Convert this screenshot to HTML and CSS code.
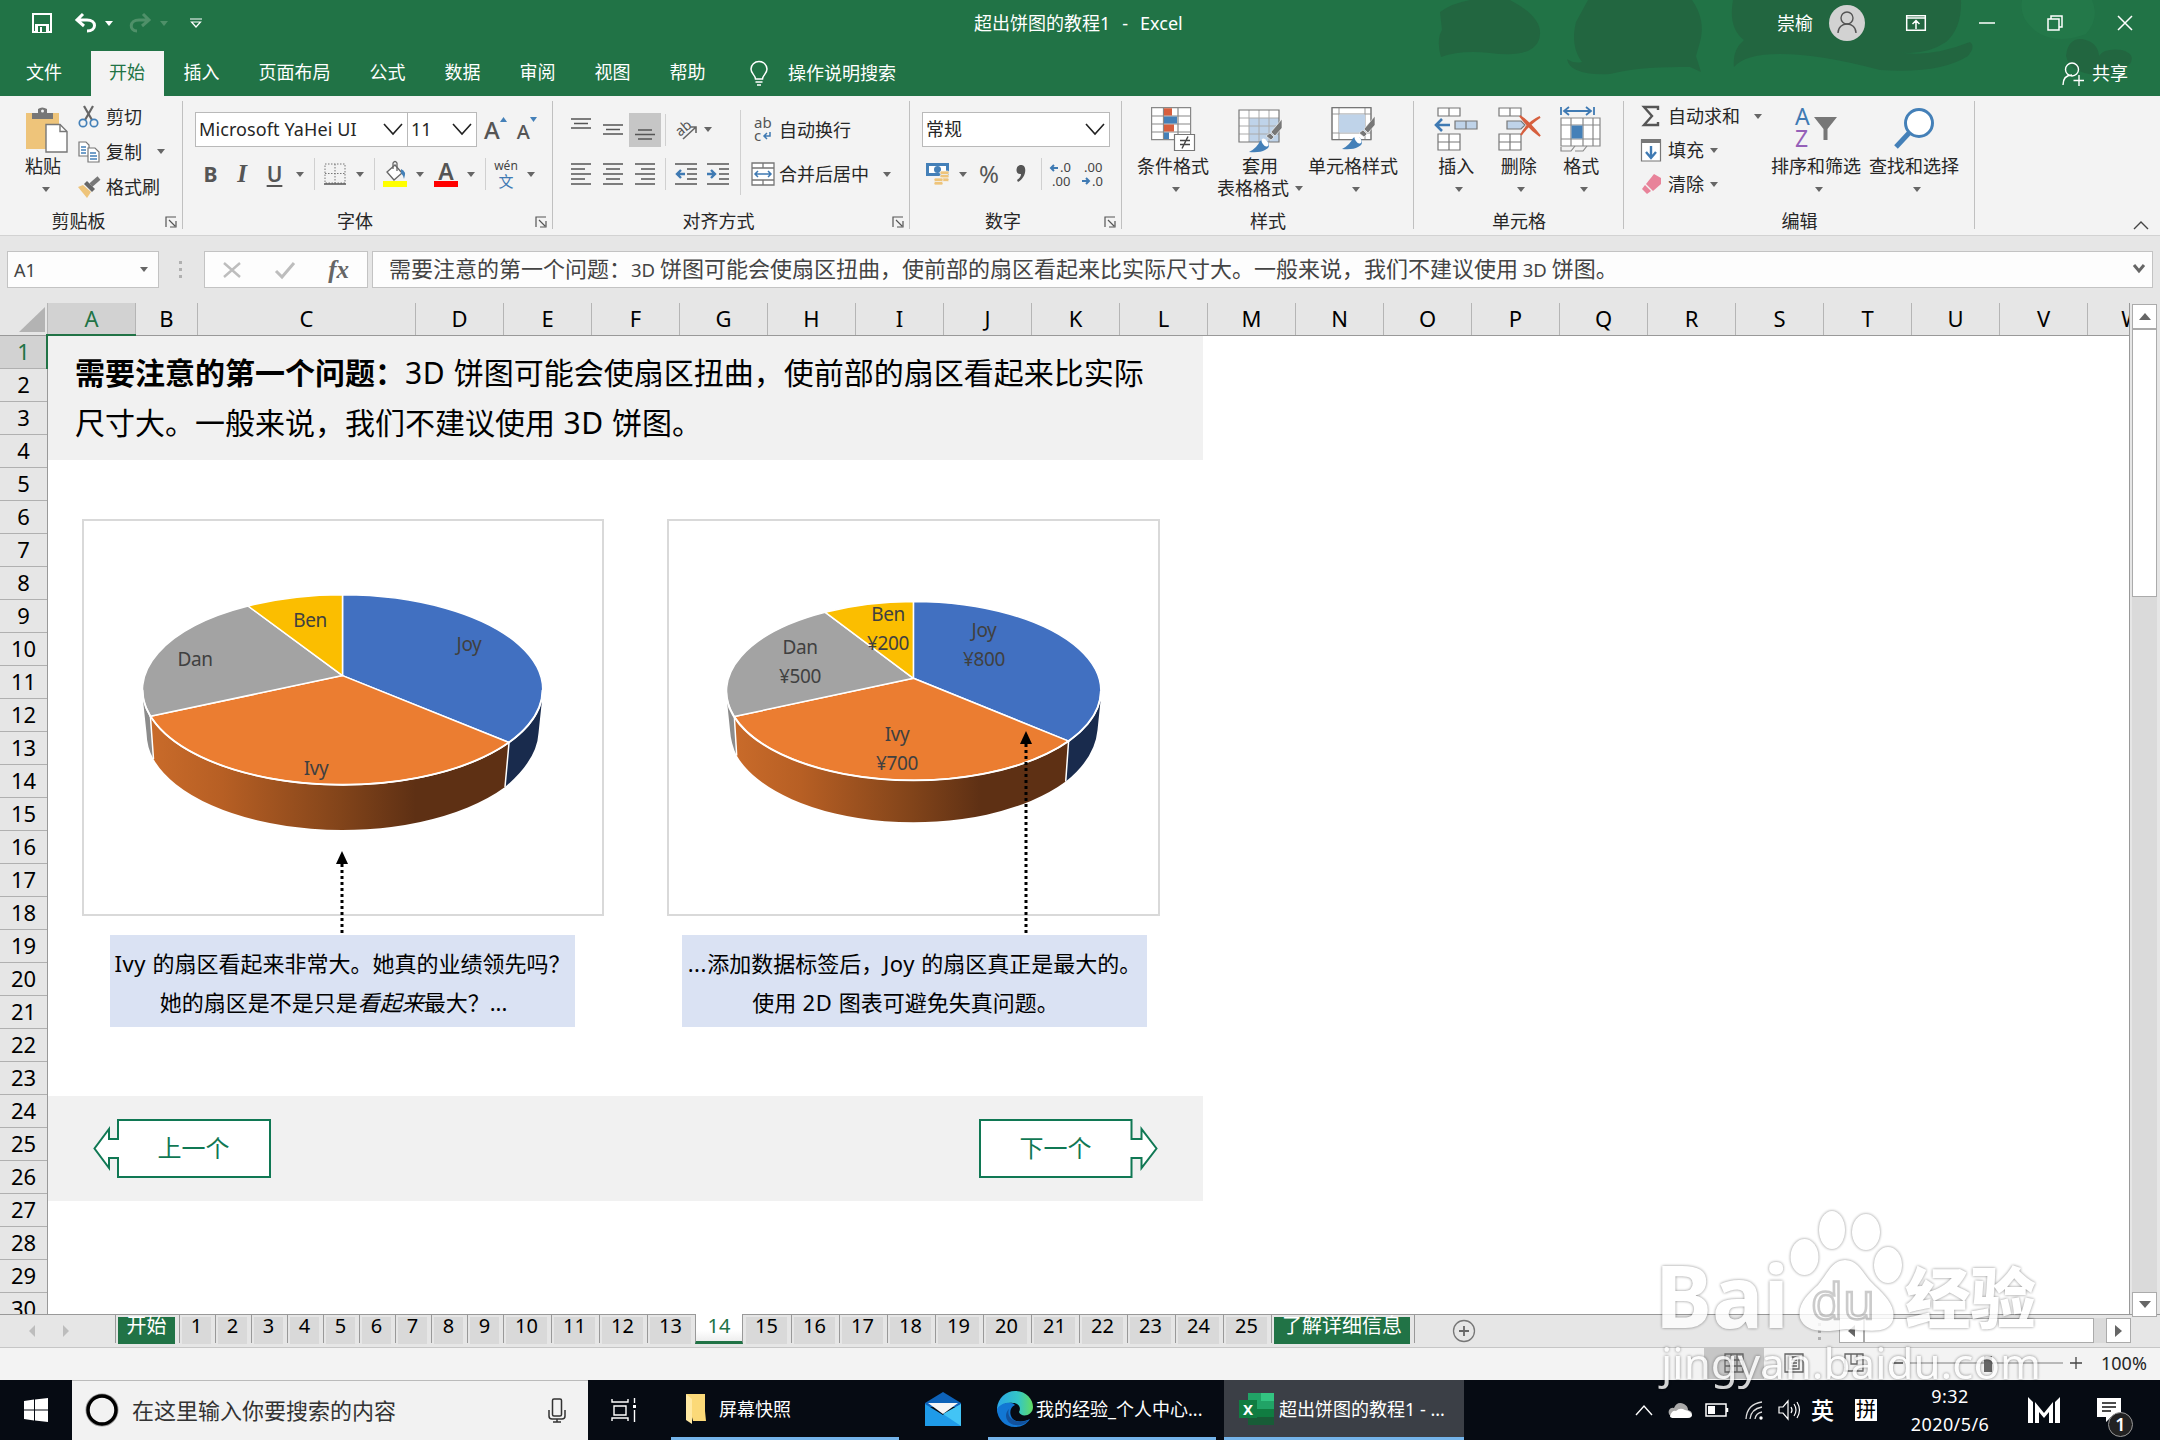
FILE: index.html
```
<!DOCTYPE html>
<html lang="zh-CN">
<head>
    <meta charset="UTF-8">
    <title>超出饼图的教程1 - Excel</title>
    <link rel="stylesheet" href="styles.css">
</head>
<body>
    <header class="titlebar">
        <svg class="title-art" width="760" height="96" viewBox="1400 0 760 96">
            <g fill="#226640">
                <path d="M1440 12 Q1465 -6 1510 0 Q1548 20 1538 42 Q1530 58 1490 53 Q1460 50 1441 57 Q1436 40 1442 30 Z"/>
                <path d="M1588 0 H1692 Q1706 20 1700 42 L1696 56 L1701 72 L1690 67 Q1640 66 1610 74 Q1570 76 1567 59 Q1574 64 1582 62 Q1570 46 1576 22 Z"/>
                <path d="M1733 0 H1961 Q1962 28 1946 42 Q1925 56 1898 52 Q1930 58 1970 42 Q1976 46 1968 56 Q1940 74 1880 70 Q1820 54 1780 54 Q1745 54 1734 67 Q1732 50 1744 40 Q1728 28 1733 0 Z"/>
                <path d="M2066 56 Q2068 38 2082 39 Q2098 42 2099 56 Q2104 48 2122 50 Q2136 54 2130 64 L2110 76 Q2070 76 2066 56 Z"/>
            </g>
            <path d="M2022 0 H2092 Q2100 18 2086 34 Q2060 44 2040 34 Q2018 20 2022 0Z" fill="#237849"/>
        </svg>
        <div class="title-row">
            <div class="quick-access">
                <svg width="20" height="20" viewBox="0 0 20 20"><path d="M1 1h18v18H1z" fill="none" stroke="#fff" stroke-width="2"/><path d="M3 11h14v8H3z" fill="#fff"/><path d="M6 13h8v6H6z" fill="#217346"/><path d="M8 14h2v5H8z" fill="#fff"/></svg>
                <svg class="undo" width="22" height="20" viewBox="0 0 22 20"><path d="M8 1 2 7l7 6M2 7h10c10 0 10 11 0 11" fill="none" stroke="#fff" stroke-width="3"/></svg>
                <i class="caret light"></i>
                <svg class="redo" width="22" height="20" viewBox="0 0 22 20"><path d="M14 1l6 6-7 6M20 7H10C0 7 0 18 8 18" fill="none" stroke="#4f9069" stroke-width="3"/></svg>
                <i class="caret dim"></i>
                <svg class="customize" width="12" height="10" viewBox="0 0 12 10"><path d="M0 1h12M1.500 4h9L6 9z" fill="none" stroke="#fff" stroke-width="1.200"/></svg>
            </div>
            <div class="doc-title">超出饼图的教程1<span>-</span>Excel</div>
            <div class="window-controls">
                <span class="user">崇榆</span>
                <svg width="36" height="36" viewBox="0 0 36 36"><circle cx="18" cy="18" r="18" fill="#d2d2d2"/><g fill="none" stroke="#555" stroke-width="1.400"><circle cx="18" cy="13" r="6"/><path d="M9 28c0-12 18-12 18 0"/></g></svg>
                <svg class="ribbon-opt" width="20" height="16" viewBox="0 0 20 16"><path d="M.7.7h18.600v14.600H.7zM.7 3h18.600M10 14V6M6.500 9 10 5.500 13.500 9" fill="none" stroke="#fff" stroke-width="1.500"/></svg>
                <svg class="minimize" width="16" height="16" viewBox="0 0 16 16"><path d="M0 8h16" stroke="#fff" stroke-width="1.500"/></svg>
                <svg class="restore" width="16" height="16" viewBox="0 0 16 16"><path d="M1 4h11v11H1zM4 4V1h11v11h-3" fill="none" stroke="#fff" stroke-width="1.500"/></svg>
                <svg class="close" width="16" height="16" viewBox="0 0 16 16"><path d="M1 1l14 14M15 1 1 15" stroke="#fff" stroke-width="1.500"/></svg>
            </div>
        </div>
        <nav class="menu">
            <span class="menu-tab file">文件</span>
            <span class="menu-tab active">开始</span>
            <span class="menu-tab">插入</span>
            <span class="menu-tab">页面布局</span>
            <span class="menu-tab">公式</span>
            <span class="menu-tab">数据</span>
            <span class="menu-tab">审阅</span>
            <span class="menu-tab">视图</span>
            <span class="menu-tab">帮助</span>
            <svg class="bulb" width="18" height="25" viewBox="0 0 18 25"><path d="M5.500 18c0-4-4.500-5-4.500-10a8 7.500 0 0 1 16 0c0 5-4.500 6-4.500 10zM5.500 21h7M7 24h4" fill="none" stroke="#fff" stroke-width="1.500"/></svg>
            <span class="tell-me">操作说明搜索</span>
            <div class="share">
                <svg width="22" height="24" viewBox="0 0 22 24"><path d="M10 13C4 13 1 17 1 23M17 13v11M11.500 18.500h10.500" fill="none" stroke="#fff" stroke-width="1.400"/><circle cx="10" cy="7.500" r="6.500" fill="none" stroke="#fff" stroke-width="1.400"/></svg>
                <span>共享</span>
            </div>
        </nav>
    </header>

    <section class="ribbon">
        <div class="group clipboard">
            <div class="group-body">
                <div class="big-btn paste">
                    <svg width="42" height="46" viewBox="0 0 42 46"><path d="M0 6h33v36H0z" fill="#eec47a"/><path d="M6 12V6h6V2q4-3 9 0v4h6v6z" fill="#777"/><circle cx="16.500" cy="4" r="1.500" fill="#f3f3f3"/><path d="M20 17.500h14l7 7v20.500H20z" fill="#fff" stroke="#777" stroke-width="1.400"/><path d="M34 17.500v7h7" fill="none" stroke="#777" stroke-width="1.400"/></svg>
                    <span>粘贴</span><i class="caret"></i>
                </div>
                <div class="small-list">
                    <div class="small-btn"><svg width="22" height="22" viewBox="0 0 22 22"><path d="M6 0l8 14M15 0 7 14" stroke="#666" stroke-width="2.200"/><g fill="none" stroke="#4480b8" stroke-width="1.700"><circle cx="5" cy="17" r="3.700"/><circle cx="16" cy="17" r="3.700"/></g></svg><span>剪切</span></div>
                    <div class="small-btn copy"><svg width="22" height="22" viewBox="0 0 22 22"><g fill="#fff" stroke="#777" stroke-width="1.200"><path d="M1 1h7l3 3v11H1z"/><path d="M10 7h7l4 4v10H10z"/></g><path d="M3 6h5M3 9h5M3 12h5M12 12h6M12 15h7M12 18h7" stroke="#4480b8" stroke-width="1.400"/></svg><span>复制</span><i class="caret"></i></div>
                    <div class="small-btn"><svg width="22" height="22" viewBox="0 0 22 22"><path d="M21 2l-8 7" stroke="#777" stroke-width="4.500"/><path d="M9 5l8 8-3 3-8-8z" fill="#666"/><path d="M5 9l8 7-4 6L0 11z" fill="#eec47a"/></svg><span>格式刷</span></div>
                </div>
            </div>
            <div class="group-label launch">剪贴板<svg width="12" height="12" viewBox="0 0 12 12"><path d="M1 11V1h10M4 4l6 6M11 5v6H5" fill="none" stroke="#555" stroke-width="1.200"/></svg></div>
        </div>

        <div class="group font">
            <div class="group-body rows">
                <div class="row-top">
                    <div class="select name">Microsoft YaHei UI<svg width="20" height="12" viewBox="0 0 20 12"><path d="M1 1l9 10 9-10" fill="none" stroke="#222" stroke-width="1.600"/></svg></div>
                    <div class="select size">11<svg width="20" height="12" viewBox="0 0 20 12"><path d="M1 1l9 10 9-10" fill="none" stroke="#222" stroke-width="1.600"/></svg></div>
                    <span class="grow-a">A<svg width="7" height="5" viewBox="0 0 7 5"><path d="M0 5 3.500 0 7 5z" fill="#4480b8"/></svg></span>
                    <span class="grow-a shrink">A<svg width="7" height="5" viewBox="0 0 7 5"><path d="M0 0h7L3.500 5z" fill="#4480b8"/></svg></span>
                </div>
                <div class="row-bottom font-tools">
                    <b>B</b><em class="serif-i">I</em><span class="under-u">U</span><i class="caret"></i><i class="sep"></i>
                    <svg width="22" height="22" viewBox="0 0 22 22"><path d="M1 1h20v19H1zM11 1v19M1 10.500h20" fill="none" stroke="#777" stroke-dasharray="1.500 1.500"/><path d="M0 21h22" stroke="#555" stroke-width="1.500"/></svg>
                    <i class="caret"></i><i class="sep"></i>
                    <svg width="24" height="26" viewBox="0 0 24 26"><path d="M4 11 12 4l7 8-8 7z" fill="#fff" stroke="#666" stroke-width="1.300"/><path d="M10 8V2q2-3 4 0v8" fill="none" stroke="#666" stroke-width="1.300"/><path d="M18 8q6 2 3 10-1-4-3-6z" fill="#4480b8"/><path d="M0 20h24v6H0z" fill="#ff0"/></svg>
                    <i class="caret"></i>
                    <span class="font-color">A</span>
                    <i class="caret"></i><i class="sep"></i>
                    <span class="phonetic"><small>wén</small><span>文</span></span>
                    <i class="caret"></i>
                </div>
            </div>
            <div class="group-label launch">字体<svg width="12" height="12" viewBox="0 0 12 12"><path d="M1 11V1h10M4 4l6 6M11 5v6H5" fill="none" stroke="#555" stroke-width="1.200"/></svg></div>
        </div>

        <div class="group align">
            <div class="group-body">
                <div class="align-left">
                    <div class="row-top align-tools">
                        <svg class="up" width="20" height="12" viewBox="0 0 20 12"><path d="M0 1h20M3 5.500h14M0 10h20" stroke="#555" stroke-width="1.300"/></svg>
                        <svg width="20" height="12" viewBox="0 0 20 12"><path d="M0 1h20M3 5.500h14M0 10h20" stroke="#555" stroke-width="1.300"/></svg>
                        <span class="pressed"><svg width="20" height="12" viewBox="0 0 20 12"><path d="M3 1h14M0 5.500h20M3 10h14" stroke="#555" stroke-width="1.300"/></svg></span>
                        <i class="sep"></i>
                        <svg width="22" height="22" viewBox="0 0 22 22"><text x="1" y="14" font-size="14" fill="#555" transform="rotate(-40 8 12)">ab</text><path d="M7 20 20 8M14 8h6v6" fill="none" stroke="#666" stroke-width="1.600"/></svg>
                        <i class="caret"></i>
                    </div>
                    <div class="row-bottom align-tools second">
                        <svg width="20" height="22" viewBox="0 0 20 22"><path d="M0 1h20M0 6h14M0 11h20M0 16h14M0 21h20" stroke="#555" stroke-width="1.300"/></svg>
                        <svg width="20" height="22" viewBox="0 0 20 22"><path d="M0 1h20M3 6h14M0 11h20M3 16h14M0 21h20" stroke="#555" stroke-width="1.300"/></svg>
                        <svg width="20" height="22" viewBox="0 0 20 22"><path d="M0 1h20M6 6h14M0 11h20M6 16h14M0 21h20" stroke="#555" stroke-width="1.300"/></svg>
                        <i class="sep"></i>
                        <svg width="22" height="22" viewBox="0 0 22 22"><path d="M0 1h22M12 6h10M12 11h10M12 16h10M0 21h22" stroke="#555" stroke-width="1.300"/><path d="M10 11H2M6 7l-4 4 4 4" fill="none" stroke="#3f7ab3" stroke-width="2.400"/></svg>
                        <svg width="22" height="22" viewBox="0 0 22 22"><path d="M0 1h22M12 6h10M12 11h10M12 16h10M0 21h22" stroke="#555" stroke-width="1.300"/><path d="M0 11h8M4 7l4 4-4 4" fill="none" stroke="#3f7ab3" stroke-width="2.400"/></svg>
                    </div>
                </div>
                <div class="align-right">
                    <div class="row-top wrap-btn">
                        <svg width="18" height="24" viewBox="0 0 18 24"><text x="0" y="10" font-size="15" fill="#555">ab</text><text x="0" y="23" font-size="15" fill="#555">c</text><path d="M16 14v4h-6M13 15l-3 3 3 3" fill="none" stroke="#3f7ab3" stroke-width="1.500"/></svg>
                        <span>自动换行</span>
                    </div>
                    <div class="row-bottom wrap-btn">
                        <svg width="24" height="24" viewBox="0 0 24 24"><path d="M1 1h22v22H1zM1 6h22M1 18h22M12 1v5M12 18v5" fill="#fff" stroke="#777" stroke-width="1.300"/><path d="M4 12h16M7 9l-3 3 3 3M17 9l3 3-3 3" fill="none" stroke="#3f7ab3" stroke-width="1.500"/></svg>
                        <span>合并后居中</span><i class="caret"></i>
                    </div>
                </div>
            </div>
            <div class="group-label launch">对齐方式<svg width="12" height="12" viewBox="0 0 12 12"><path d="M1 11V1h10M4 4l6 6M11 5v6H5" fill="none" stroke="#555" stroke-width="1.200"/></svg></div>
        </div>

        <div class="group number">
            <div class="group-body rows">
                <div class="row-top"><div class="select format">常规<svg width="20" height="12" viewBox="0 0 20 12"><path d="M1 1l9 10 9-10" fill="none" stroke="#222" stroke-width="1.600"/></svg></div></div>
                <div class="row-bottom number-tools">
                    <svg width="24" height="22" viewBox="0 0 24 22"><path d="M0 0h23v13H0z" fill="#4480b8"/><path d="M3 3h17v7H3z" fill="#fff"/><circle cx="11.500" cy="6.500" r="3.500" fill="#4480b8"/><g fill="#eec47a" stroke="#f3f3f3" stroke-width=".7"><rect x="14" y="8" width="9" height="3.500" rx="1.500"/><rect x="14" y="11.500" width="9" height="3.500" rx="1.500"/><rect x="14" y="15" width="9" height="3.500" rx="1.500"/><rect x="8" y="15" width="9" height="3.500" rx="1.500"/><rect x="8" y="18.500" width="9" height="3.500" rx="1.500"/></g></svg>
                    <i class="caret"></i><span class="percent">%</span>
                    <svg width="10" height="18" viewBox="0 0 10 18"><path d="M5 0c7 0 5 13-3 17l-1-2c3-2 4-4 4-6-6 1-6-9 0-9z" fill="#555"/></svg>
                    <i class="sep"></i>
                    <svg width="24" height="24" viewBox="0 0 24 24"><text x="10" y="10" font-size="13" fill="#444">.0</text><text x="2" y="24" font-size="13" fill="#444">.00</text><path d="M8 6H1M4 3 1 6l3 3" fill="none" stroke="#3f7ab3" stroke-width="2"/></svg>
                    <svg width="24" height="24" viewBox="0 0 24 24"><text x="2" y="10" font-size="13" fill="#444">.00</text><text x="10" y="24" font-size="13" fill="#444">.0</text><path d="M0 19h7M4 16l3 3-3 3" fill="none" stroke="#3f7ab3" stroke-width="2"/></svg>
                </div>
            </div>
            <div class="group-label launch">数字<svg width="12" height="12" viewBox="0 0 12 12"><path d="M1 11V1h10M4 4l6 6M11 5v6H5" fill="none" stroke="#555" stroke-width="1.200"/></svg></div>
        </div>

        <div class="group styles">
            <div class="group-body">
                <div class="big-btn">
                    <svg width="44" height="46" viewBox="0 0 44 46"><path d="M.6.6h39v32H.6zM.6 9h39M.6 17h39M.6 25h39M12.500.6v32M27 .6v32" fill="#fff" stroke="#888" stroke-width="1.200"/><path d="M13 1.200h8V8.500h-8zM13 17.500h10v7H13z" fill="#d65f3e"/><path d="M13 9.500h13v7H13zM13 25.500h5V32h-5z" fill="#4480b8"/><path d="M23.500 27.500h20v16h-20z" fill="#fff" stroke="#777" stroke-width="1.200"/><path d="M29 33.500h10M29 37.500h10M37 29.500l-6 12" stroke="#444" stroke-width="1.400"/></svg>
                    <span>条件格式</span><i class="caret"></i>
                </div>
                <div class="big-btn table-fmt">
                    <svg width="44" height="46" viewBox="0 0 44 46"><path d="M1 3h40v32H1z" fill="#fff"/><path d="M11 11h30v24H11z" fill="#bfd3e9"/><path d="M1 11h40M1 19h40M1 27h40M11 3v32M21 3v32M31 3v32" stroke="#aaa"/><path d="M1 3h40v32H1z" fill="none" stroke="#777" stroke-width="1.200"/><path d="M44 12v9l-7 8-4-4zM32 26l4 4-3 3-5-4z" fill="#777" stroke="#fff" stroke-width=".6"/><path d="M11 45q8-4 11-11 5-3 8 1 3 5-3 8-5 3-16 2z" fill="#4480b8"/><ellipse cx="27" cy="35.500" rx="2.600" ry="4.500" transform="rotate(-35 27 35.500)" fill="#fff"/></svg>
                    <span>套用</span><span class="second-line">表格格式<i class="caret"></i></span>
                </div>
                <div class="big-btn">
                    <svg width="44" height="46" viewBox="0 0 44 46"><path d="M1 .6h39v32H1zM1 7h39M1 26h39M8 .6v32M34 .6v32" fill="#fff" stroke="#999"/><path d="M1 .6h39v32H1z" fill="none" stroke="#777" stroke-width="1.200"/><path d="M8 7.500h26V25.500H8z" fill="#bfd3e9"/><path d="M44 9v9l-7 8-4-4zM32 23l4 4-3 3-5-4z" fill="#777" stroke="#fff" stroke-width=".6"/><path d="M11 42q8-4 11-11 5-3 8 1 3 5-3 8-5 3-16 2z" fill="#4480b8"/><ellipse cx="27" cy="32.500" rx="2.600" ry="4.500" transform="rotate(-35 27 32.500)" fill="#fff"/></svg>
                    <span>单元格样式</span><i class="caret"></i>
                </div>
            </div>
            <div class="group-label">样式</div>
        </div>

        <div class="group cells">
            <div class="group-body">
                <div class="big-btn">
                    <svg width="44" height="46" viewBox="0 0 44 46"><g fill="#fff" stroke="#777" stroke-width="1.200"><path d="M4 1h22v8H4zM15 1v8M4 27h22v16H4zM15 27v16M4 35h22"/></g><path d="M21 14h22v8H21zM32 14v8" fill="#bfd3e9" stroke="#777" stroke-width="1.200"/><path d="M16 18H2M8 12l-6 6 6 6" fill="none" stroke="#3f7ab3" stroke-width="2.600"/></svg>
                    <span>插入</span><i class="caret"></i>
                </div>
                <div class="big-btn">
                    <svg width="44" height="46" viewBox="0 0 44 46"><g fill="#fff" stroke="#777" stroke-width="1.200"><path d="M2 1h22v8H2zM13 1v8M2 27h22v16H2zM13 27v16M2 35h22"/></g><path d="M10 14h14l4 4-4 4H10z" fill="#bfd3e9" stroke="#777" stroke-width="1.200"/><path d="M23 9q9 6 20 20-10-7-20-20zM43 10q-12 8-19 18 6-12 19-18z" fill="#d65f3e" stroke="#d65f3e" stroke-width="2"/></svg>
                    <span>删除</span><i class="caret"></i>
                </div>
                <div class="big-btn">
                    <svg width="44" height="46" viewBox="0 0 44 46"><path d="M2 0v8M35 0v8M5 4h27M10 0 5 4l5 4M27 0l5 4-5 4" fill="none" stroke="#3f7ab3" stroke-width="1.800"/><path d="M2 11h39v28H2zM2 18h39M2 32h39M12 11v28M24 11v28M34 11v28" fill="#fff" stroke="#888" stroke-width="1.200"/><path d="M12.500 18.500h11v13h-11z" fill="#4480b8"/><path d="M2 40v4h10l4-5M16 44h8l4-5" fill="none" stroke="#888" stroke-width="1.200"/></svg>
                    <span>格式</span><i class="caret"></i>
                </div>
            </div>
            <div class="group-label">单元格</div>
        </div>

        <div class="group editing">
            <div class="group-body">
                <div class="small-list">
                    <div class="small-btn sum"><svg width="22" height="22" viewBox="0 0 22 22"><path d="M18 5V2H4l8 9-8 9h14v-3" fill="none" stroke="#555" stroke-width="2.400"/></svg><span>自动求和</span><i class="caret"></i></div>
                    <div class="small-btn"><svg width="22" height="24" viewBox="0 0 22 24"><path d="M1.500 2h19v21h-19z" fill="#fff" stroke="#777" stroke-width="1.200"/><path d="M1 1h20v4H1z" fill="#777"/><path d="M11 8v11M6 14l5 6 5-6" fill="none" stroke="#3f7ab3" stroke-width="2.400"/></svg><span>填充</span><i class="caret"></i></div>
                    <div class="small-btn"><svg width="22" height="22" viewBox="0 0 22 22"><path d="M14 1 21 5v6l-8 7-7-7z" fill="#e8839a"/><path d="M5 12l6 6-4 3-5-5z" fill="#e8839a"/></svg><span>清除</span><i class="caret"></i></div>
                </div>
                <div class="big-btn">
                    <svg width="44" height="46" viewBox="0 0 44 46"><text x="1" y="18" font-size="23" fill="#3f7ab3">A</text><text x="1" y="40" font-size="23" fill="#9560b8">Z</text><path d="M20 10h23L33.500 22v11h-4V22z" fill="#777"/></svg>
                    <span>排序和筛选</span><i class="caret"></i>
                </div>
                <div class="big-btn">
                    <svg width="44" height="46" viewBox="0 0 44 46"><circle cx="27" cy="16" r="13.500" fill="#fff" stroke="#4480b8" stroke-width="3"/><path d="M17 26 4 40" stroke="#4480b8" stroke-width="5"/></svg>
                    <span>查找和选择</span><i class="caret"></i>
                </div>
            </div>
            <div class="group-label">编辑</div>
        </div>
        <svg class="collapse" width="16" height="9" viewBox="0 0 16 9"><path d="M1 8l7-7 7 7" fill="none" stroke="#444" stroke-width="1.400"/></svg>
    </section>

    <section class="formula-bar">
        <div class="box name-box"><span>A1</span><i class="caret"></i></div>
        <div class="dots"></div>
        <div class="box fx-box">
            <svg width="18" height="16" viewBox="0 0 18 16"><path d="M1 1l16 14M17 1 1 15" stroke="#bdbdbd" stroke-width="2.400"/></svg>
            <svg width="20" height="16" viewBox="0 0 20 16"><path d="M1 9l6 6L19 1" fill="none" stroke="#bdbdbd" stroke-width="3"/></svg>
            <span class="fx">fx</span>
        </div>
        <div class="box formula"><span>需要注意的第一个问题：<small>3D </small>饼图可能会使扇区扭曲，使前部的扇区看起来比实际尺寸大。一般来说，我们不建议使用<small> 3D </small>饼图。</span>
            <svg width="12" height="10" viewBox="0 0 12 10"><path d="M1 1l5 6 5-6" fill="none" stroke="#666" stroke-width="3"/></svg>
        </div>
    </section>

    <main class="workbook">
        <div class="grid-area">
            <div class="col-heads">
                <div class="corner"><svg width="26" height="26" viewBox="0 0 26 26"><path d="M26 0v25H0z" fill="#b3b3b3"/></svg></div>
                <div class="col a">A</div><div class="col b">B</div><div class="col c">C</div>
                <div class="col">D</div><div class="col">E</div><div class="col">F</div><div class="col">G</div>
                <div class="col">H</div><div class="col">I</div><div class="col">J</div><div class="col">K</div>
                <div class="col">L</div><div class="col">M</div><div class="col">N</div><div class="col">O</div>
                <div class="col">P</div><div class="col">Q</div><div class="col">R</div><div class="col">S</div>
                <div class="col">T</div><div class="col">U</div><div class="col">V</div><div class="col">W</div>
            </div>
            <div class="grid-body">
                <div class="row-heads">
                    <div class="row selected">1</div><div class="row">2</div><div class="row">3</div><div class="row">4</div><div class="row">5</div>
                    <div class="row">6</div><div class="row">7</div><div class="row">8</div><div class="row">9</div><div class="row">10</div>
                    <div class="row">11</div><div class="row">12</div><div class="row">13</div><div class="row">14</div><div class="row">15</div>
                    <div class="row">16</div><div class="row">17</div><div class="row">18</div><div class="row">19</div><div class="row">20</div>
                    <div class="row">21</div><div class="row">22</div><div class="row">23</div><div class="row">24</div><div class="row">25</div>
                    <div class="row">26</div><div class="row">27</div><div class="row">28</div><div class="row">29</div><div class="row">30</div>
                </div>
                <div class="sheet">
                    <div class="banner"><b>需要注意的第一个问题：</b><span class="lat">3D </span>饼图可能会使扇区扭曲，使前部的扇区看起来比实际<br>尺寸大。一般来说，我们不建议使用<span class="lat"> 3D </span>饼图。</div>
                    <div class="charts">
                        <svg class="chart" width="522" height="397" viewBox="83 519 522 397">
                            <defs>
                                <linearGradient id="rim1" gradientUnits="userSpaceOnUse" x1="151" y1="0" x2="510" y2="0">
                                    <stop offset="0" stop-color="#c96b2a"/><stop offset=".2" stop-color="#b75f24"/><stop offset=".53" stop-color="#82441a"/><stop offset=".74" stop-color="#5e3014"/><stop offset="1" stop-color="#5e3014"/>
                                </linearGradient>
                            </defs>
                            <rect x="84" y="520" width="520" height="395" fill="#fff" stroke="#d9d9d9" stroke-width="2"/>
                            <path d="M144 700L147.500 733Q148 748 154.500 759L151.400 716Z" fill="#8c8c8c"/>
                            <path d="M543 700L539.500 733Q538 760 506 787L510 743Z" fill="#192b4d"/>
                            <path d="M151.400 716L154.500 759A196 97 0 0 0 506 787L510 743A200 95 0 0 1 151.400 716Z" fill="url(#rim1)"/>
                            <path d="M151.400 716L154.500 759M510 743L506 787" stroke="#fff" stroke-width="1.500"/>
                            <g stroke="#fff" stroke-width="1.500" stroke-linejoin="round">
                                <path d="M343.500 675.600V594.700A200 95 0 0 1 510 742.500Z" fill="#4170c1"/>
                                <path d="M343.500 675.600L510 742.500A200 95 0 0 1 151.400 716.200Z" fill="#eb7d31"/>
                                <path d="M343.500 675.600L151.400 716.200A200 95 0 0 1 249 606Z" fill="#a3a3a3"/>
                                <path d="M343.500 675.600L249 606A200 95 0 0 1 343.500 594.700Z" fill="#fbbe00"/>
                            </g>
                            <path d="M143.500 689.700A200 95 0 0 0 543.500 689.700" fill="none" stroke="#fff" stroke-width="1.800"/>
                            <g class="chart-label">
                                <text x="470" y="651">Joy</text><text x="311" y="627">Ben</text>
                                <text x="196" y="666">Dan</text><text x="317" y="775">Ivy</text>
                            </g>
                        </svg>
                        <svg class="chart" width="493" height="397" viewBox="667 519 493 397">
                            <defs>
                                <linearGradient id="rim2" gradientUnits="userSpaceOnUse" x1="734" y1="0" x2="1068" y2="0">
                                    <stop offset="0" stop-color="#c96b2a"/><stop offset=".2" stop-color="#b75f24"/><stop offset=".53" stop-color="#82441a"/><stop offset=".74" stop-color="#5e3014"/><stop offset="1" stop-color="#5e3014"/>
                                </linearGradient>
                            </defs>
                            <rect x="668" y="520" width="491" height="395" fill="#fff" stroke="#d9d9d9" stroke-width="2"/>
                            <path d="M727 701L730 730Q731 744 736.700 755.500L734.300 716Z" fill="#8c8c8c"/>
                            <path d="M1100.500 701L1097.500 730Q1095 758 1065.700 781.600L1068.600 741Z" fill="#192b4d"/>
                            <path d="M734.300 716L736.700 755.500A184 92.700 0 0 0 1065.700 781.600L1068.600 741A187.400 89.500 0 0 1 734.300 716Z" fill="url(#rim2)"/>
                            <path d="M734.300 716L736.700 755.500M1068.600 741L1065.700 781.600" stroke="#fff" stroke-width="1.500"/>
                            <g stroke="#fff" stroke-width="1.500" stroke-linejoin="round">
                                <path d="M913.400 678.300V601.400A187.400 89.500 0 0 1 1068.600 741.100Z" fill="#4170c1"/>
                                <path d="M913.400 678.300L1068.600 741.100A187.400 89.500 0 0 1 734.300 716.500Z" fill="#eb7d31"/>
                                <path d="M913.400 678.300L734.300 716.500A187.400 89.500 0 0 1 825 612.200Z" fill="#a3a3a3"/>
                                <path d="M913.400 678.300L825 612.200A187.400 89.500 0 0 1 913.400 601.400Z" fill="#fbbe00"/>
                            </g>
                            <path d="M726 690.900A187.400 89.500 0 0 0 1100.800 690.900" fill="none" stroke="#fff" stroke-width="1.800"/>
                            <g class="chart-label">
                                <text x="984" y="637">Joy</text><text x="984" y="666">¥800</text>
                                <text x="888" y="621">Ben</text><text x="888" y="650">¥200</text>
                                <text x="800" y="654">Dan</text><text x="800" y="683">¥500</text>
                                <text x="897" y="741">Ivy</text><text x="897" y="770">¥700</text>
                            </g>
                        </svg>
                    </div>
                    <div class="callouts">
                        <div class="callout"><span class="lat">Ivy </span>的扇区看起来非常大。她真的业绩领先吗？<br><span class="second">她的扇区是不是只是<em>看起来</em>最大？...</span></div>
                        <div class="callout"><span class="lat">...</span>添加数据标签后，<span class="lat">Joy </span>的扇区真正是最大的。<br><span class="second">使用<span class="lat"> 2D </span>图表可避免失真问题。</span></div>
                    </div>
                    <div class="nav-band">
                        <svg width="180" height="62" viewBox="92 1117 180 62"><path d="M118 1120H270V1177H118V1158H109V1168L94.500 1148.500L109 1129V1139H118Z" fill="#fff" stroke="#107854" stroke-width="2"/><text x="193.500" y="1157" class="nav-text">上一个</text></svg>
                        <svg width="180" height="62" viewBox="979 1117 180 62"><path d="M980 1120H1131.500V1139H1141.500V1129L1156.500 1148.500L1141.500 1168V1158H1131.500V1177H980Z" fill="#fff" stroke="#107854" stroke-width="2"/><text x="1055.500" y="1157" class="nav-text">下一个</text></svg>
                    </div>
                    <svg class="arrow first" width="14" height="84" viewBox="0 0 14 84"><path d="M7 0l6 13H1z"/><path d="M7 13v71" stroke="#000" stroke-width="3" stroke-dasharray="3 3"/></svg>
                    <svg class="arrow last" width="14" height="204" viewBox="0 0 14 204"><path d="M7 0l6 13H1z"/><path d="M7 13v191" stroke="#000" stroke-width="3" stroke-dasharray="3 3"/></svg>
                    <i class="cell-cursor"></i>
                </div>
            </div>
        </div>
        <div class="v-scroll">
            <div class="scroll-btn"><svg width="12" height="7" viewBox="0 0 12 7"><path d="M0 7 6 0l6 7z" fill="#666"/></svg></div>
            <div class="v-thumb"></div>
            <div class="scroll-btn end"><svg width="12" height="7" viewBox="0 0 12 7"><path d="M0 0h12L6 7z" fill="#666"/></svg></div>
        </div>
    </main>

    <section class="sheet-tabs">
        <div class="tab-nav">
            <svg width="6" height="12" viewBox="0 0 6 12"><path d="M6 0v12L0 6z" fill="#bdbdbd"/></svg>
            <svg width="6" height="12" viewBox="0 0 6 12"><path d="M0 0v12l6-6z" fill="#bdbdbd"/></svg>
        </div>
        <div class="tab start"><span>开始</span></div>
        <div class="tab"><span>1</span></div><div class="tab"><span>2</span></div><div class="tab"><span>3</span></div>
        <div class="tab"><span>4</span></div><div class="tab"><span>5</span></div><div class="tab"><span>6</span></div>
        <div class="tab"><span>7</span></div><div class="tab"><span>8</span></div><div class="tab"><span>9</span></div>
        <div class="tab two"><span>10</span></div><div class="tab two"><span>11</span></div><div class="tab two"><span>12</span></div>
        <div class="tab two"><span>13</span></div><div class="tab two current"><span>14</span></div><div class="tab two after"><span>15</span></div>
        <div class="tab two"><span>16</span></div><div class="tab two"><span>17</span></div><div class="tab two"><span>18</span></div>
        <div class="tab two"><span>19</span></div><div class="tab two"><span>20</span></div><div class="tab two"><span>21</span></div>
        <div class="tab two"><span>22</span></div><div class="tab two"><span>23</span></div><div class="tab two"><span>24</span></div>
        <div class="tab two"><span>25</span></div><div class="tab more"><span>了解详细信息</span></div>
        <svg class="add-sheet" width="24" height="24" viewBox="0 0 24 24"><circle cx="12" cy="12" r="10.500" fill="none" stroke="#777" stroke-width="1.300"/><path d="M12 7v10M7 12h10" stroke="#666" stroke-width="1.800"/></svg>
        <div class="h-scroll-wrap">
            <div class="dots small"></div>
            <div class="h-scroll">
                <div class="scroll-btn"><svg width="7" height="12" viewBox="0 0 7 12"><path d="M7 0v12L0 6z" fill="#666"/></svg></div>
                <div class="h-thumb"></div>
                <div class="scroll-btn end"><svg width="7" height="12" viewBox="0 0 7 12"><path d="M0 0v12l7-6z" fill="#666"/></svg></div>
            </div>
        </div>
    </section>

    <section class="status-bar">
        <div class="view-btn on"><svg width="20" height="20" viewBox="0 0 20 20"><path d="M1 1h18v18H1zM1 7h18M1 13h18M7 1v18M13 1v18" fill="none" stroke="#666" stroke-width="1.300"/></svg></div>
        <div class="view-btn"><svg width="20" height="20" viewBox="0 0 20 20"><path d="M1 1h18v18H1zM5 4h10v12H5zM7 7h6M7 10h6M7 13h6" fill="none" stroke="#666" stroke-width="1.300"/></svg></div>
        <div class="view-btn"><svg width="20" height="20" viewBox="0 0 20 20"><path d="M1 18V1h18v17zM7 1v10h6V1" fill="none" stroke="#666" stroke-width="1.300"/></svg></div>
        <svg class="zoom-slider" width="192" height="20" viewBox="0 0 192 20"><path d="M0 10h11M178 10h12M184 4v12" stroke="#444" stroke-width="1.300"/><path d="M18 10h153" stroke="#a6a6a6" stroke-width="1.300"/><path d="M92 3h8v16h-8z" fill="#666"/></svg>
        <span class="zoom-text">100%</span>
    </section>

    <footer class="taskbar">
        <div class="start-btn"><svg width="24" height="24" viewBox="0 0 24 24"><path d="M0 3l10-1.500v10H0zM11 1.400 24 0v11.500H11zM0 12.500h10v10L0 21zM11 12.500h13V24l-13-1.500z" fill="#fff"/></svg></div>
        <div class="search">
            <svg width="34" height="34" viewBox="0 0 34 34"><circle cx="17" cy="17" r="14.500" fill="none" stroke="#999" stroke-width="4"/><circle cx="17" cy="17" r="14" fill="none" stroke="#000" stroke-width="3.400"/></svg>
            <span>在这里输入你要搜索的内容</span>
            <svg class="mic" width="18" height="25" viewBox="0 0 18 25"><rect x="4.500" y="1" width="9" height="17" rx="1.500" fill="none" stroke="#333" stroke-width="1.500"/><path d="M1 12v6q0 3 3 3h10q3 0 3-3v-6M9 21v3M5 24h8" fill="none" stroke="#333" stroke-width="1.500"/></svg>
        </div>
        <div class="task-view"><svg width="24" height="24" viewBox="0 0 24 24"><path d="M0 1v3h16V1M2 8h12v9H2zM0 23v-3h16v3M22.500 0v5M22.500 12v12" fill="none" stroke="#fff" stroke-width="1.400"/><path d="M21 7h3v3h-3z" fill="#fff"/></svg></div>
        <div class="task open folder">
            <svg width="22" height="32" viewBox="0 0 22 32"><path d="M1 1h19v17l1 10H8z" fill="#fbd978"/><path d="M1 1l6 5v25l-6-4z" fill="#ffe9a3"/></svg>
            <span>屏幕快照</span>
        </div>
        <div class="task mail"><svg width="36" height="34" viewBox="0 0 36 34"><path d="M0 11 18 0l18 11v4H0z" fill="#0d62b8"/><path d="M3 11h30L18 22z" fill="#f5f5f5"/><path d="M0 12l18 11L36 12v22H0z" fill="#1f9be8"/><path d="M36 12v22L18 22z" fill="#42c4f5"/></svg></div>
        <div class="task open edge">
            <svg width="36" height="36" viewBox="0 0 36 36"><defs><linearGradient id="edgeTop" x1="0" x2="1"><stop offset="0" stop-color="#29a7e8"/><stop offset=".6" stop-color="#35c6c4"/><stop offset="1" stop-color="#62dc62"/></linearGradient></defs><path d="M0 17C1 7 9 0 18 0c11 0 18 8 18 16 0 9-12 11-14 5 2-3 1-9-6-9C8 11 2 15 0 22z" fill="url(#edgeTop)"/><path d="M0 18c4-7 15-8 18-4-5 2-6 8-3 13 4 5 12 4 18 1-4 6-9 8-15 8C8 36 0 28 0 18z" fill="#1277d4"/><path d="M12 18c-3 8 5 16 20 11-6 8-22 7-23-4 0-3 1-5 3-7z" fill="#12519c"/></svg>
            <span>我的经验_个人中心...</span>
        </div>
        <div class="task open excel">
            <svg width="36" height="32" viewBox="0 0 36 32"><path d="M9 0h26v32H9z" fill="#185c37"/><path d="M9 0h13v8H9zM9 8h13v8H9z" fill="#21a366"/><path d="M22 0h13v8H22z" fill="#33c481"/><path d="M9 16h26v8H9z" fill="#107c41"/><path d="M22 8h13v8H22z" fill="#21a366"/><path d="M0 7h18v18H0z" fill="#107c41"/><text x="9" y="21.500" font-size="15" font-weight="700" text-anchor="middle" fill="#fff">X</text></svg>
            <span>超出饼图的教程1 - ...</span>
        </div>
        <div class="tray">
            <svg class="t-up" width="18" height="11" viewBox="0 0 18 11"><path d="M1 10l8-9 8 9" fill="none" stroke="#fff" stroke-width="1.400"/></svg>
            <svg class="t-cloud" width="24" height="18" viewBox="0 0 24 18"><path d="M5 16q-6-2-4-7 2-3 5-2 3-7 10-4 4 2 4 6 4 1 4 4 0 4-5 4z" fill="#aaa"/><path d="M2 15q2-6 6-5 4-4 9-1 6 1 7 5 0 3-5 3H6q-4 0-4-2z" fill="#fff"/></svg>
            <svg class="t-bat" width="24" height="14" viewBox="0 0 24 14"><path d="M1 1h20v12H1zM22.500 5v4" fill="none" stroke="#fff" stroke-width="1.500"/><path d="M3 3h7v8H3z" fill="#fff"/></svg>
            <svg class="t-wifi" width="18" height="19" viewBox="0 0 18 19"><path d="M1 18Q2 3 17 1M5 18Q6 8 17 6M10 18q1-6 7-7" fill="none" stroke="#ddd" stroke-width="1.300"/><circle cx="16" cy="17" r="1.700" fill="#fff"/></svg>
            <svg class="t-vol" width="22" height="20" viewBox="0 0 22 20"><path d="M1 7h4l5-6v18l-5-6H1zM13 7q2 3 0 6M16 4q4 6 0 12M19 2q5 8 0 16" fill="none" stroke="#fff" stroke-width="1.200"/></svg>
            <span class="t-lang">英</span>
            <span class="t-ime">拼</span>
            <div class="clock"><span>9:32</span><span>2020/5/6</span></div>
            <svg class="t-m" width="32" height="26" viewBox="0 0 32 26"><path d="M0 0l5 5v21H0zM32 0l-5 5v21h5zM7 5l9 11 9-11v21h-4V15l-5 6-5-6v11H7z" fill="#fff"/></svg>
            <div class="notice">
                <svg width="24" height="24" viewBox="0 0 24 24"><path d="M0 0h24v19H14l-5 5v-5H0z" fill="#fff"/><path d="M5 5h14M5 9h14M5 13h9" stroke="#111" stroke-width="1.300"/></svg>
                <span class="badge">1</span>
            </div>
        </div>
    </footer>

    <svg class="watermark" width="400" height="200" viewBox="1650 1200 400 200">
        <ellipse cx="1804.500" cy="1257" rx="14" ry="18"/><ellipse cx="1832" cy="1230" rx="13" ry="19"/><ellipse cx="1866" cy="1232" rx="14" ry="18"/><ellipse cx="1888" cy="1265" rx="14" ry="18"/>
        <path d="M1845 1260c14 0 18 15 30 26 11 10 21 21 18 34-5 14-21 11-47 9-24 4-41 3-46-11-3-14 8-24 18-33 10-12 14-25 27-25z"/>
        <text x="1655" y="1328" font-size="86" font-weight="700" textLength="134" lengthAdjust="spacingAndGlyphs">Bai</text>
        <text x="1905" y="1323" font-size="66" font-weight="900" textLength="131" lengthAdjust="spacingAndGlyphs">经验</text>
        <text x="1661" y="1379" font-size="42" textLength="380" lengthAdjust="spacingAndGlyphs">jingyan.baidu.com</text>
        <text x="1811" y="1319" font-size="50" textLength="64" lengthAdjust="spacingAndGlyphs" class="wm-du">du</text>
    </svg>
</body>
</html>
```
FILE: styles.css
```
* {
    box-sizing: border-box;
}
body {
    margin: 0;
    width: 2160px;
    height: 1440px;
    overflow: hidden;
    position: relative;
    display: flex;
    flex-direction: column;
    font-family: "Noto Sans", "Noto Sans CJK SC", sans-serif;
    font-size: 18px;
    line-height: 24px;
    color: #262626;
    background: #e6e6e6;
    white-space: nowrap;
}
svg {
    display: block;
    flex: none;
    overflow: visible;
}
.caret {
    width: 0;
    height: 0;
    flex: none;
    border: 4px solid transparent;
    border-top: 5px solid #666;
    border-bottom: 0;
}
.caret.light { border-top-color: #fff; }
.caret.dim { border-top-color: #4f9069; }
.sep {
    width: 1px;
    height: 32px;
    background: #d0d0d0;
}

/* title bar */
.titlebar {
    position: relative;
    height: 96px;
    background: #217346;
    color: #fff;
}
.title-art {
    position: absolute;
    right: 0;
    top: 0;
    overflow: hidden;
}
.title-row {
    position: relative;
    height: 51px;
    display: grid;
    grid-template-columns: 974px 1fr auto;
    padding-bottom: 5px;
    align-items: center;
}
.quick-access {
    display: flex;
    align-items: center;
    padding-left: 32px;
}
.undo { margin: 0 8px 0 23px; }
.redo { margin: 0 9px 0 16px; }
.customize { margin-left: 22px; }
.doc-title span { margin: 0 12px; }
.window-controls {
    display: flex;
    align-items: center;
    padding-right: 27px;
}
.user { margin-right: 16px; }
.ribbon-opt { margin-left: 41px; }
.minimize { margin-left: 53px; }
.restore { margin-left: 52px; }
.close { margin-left: 54px; }
.menu {
    position: relative;
    display: flex;
    align-items: center;
    height: 45px;
}
.menu-tab {
    height: 45px;
    line-height: 43px;
    padding: 0 19.500px;
}
.menu-tab.file { padding: 0 29px 0 26px; }
.menu-tab.active {
    padding: 0 18px;
    width: 73px;
    background: #f3f3f3;
    color: #217346;
}
.bulb { margin: 0 20px 0 25px; }
.tell-me { margin-top: -2px; }
.share {
    margin-left: auto;
    margin-right: 32px;
    display: flex;
    gap: 8px;
}
.share span { margin-top: -1px; }

/* ribbon */
.ribbon {
    height: 140px;
    flex: none;
    display: flex;
    position: relative;
    background: #f3f3f3;
    border-bottom: 1px solid #d2d2d2;
}
.group {
    display: flex;
    flex-direction: column;
    position: relative;
}
.group::after {
    content: "";
    position: absolute;
    right: 0;
    top: 5px;
    width: 1px;
    height: 128px;
    background: #c0c0c0;
}
.clipboard { width: 183px; }
.font { width: 370px; }
.align { width: 357px; }
.number { width: 212px; }
.styles { width: 292px; }
.cells { width: 210px; }
.editing { width: 351px; }
.group-body {
    height: 113px;
    display: flex;
}
.group-body.rows {
    display: block;
    padding-left: 12px;
}
.group-label {
    height: 24px;
    line-height: 22px;
    display: flex;
    justify-content: center;
    align-items: center;
}
.group-label.launch {
    justify-content: space-between;
    padding-right: 6px;
}
.group-label.launch::before {
    content: "";
}
.group-label.launch svg { margin: 2px 0 0 8px; }
.big-btn {
    display: flex;
    flex-direction: column;
    align-items: center;
    padding-top: 11px;
}
.big-btn > span {
    height: 23px;
    line-height: 23px;
    margin-top: 2px;
}
.big-btn > .caret { margin: 9px 0 0 5px; }
.big-btn .second-line {
    margin-top: -1px;
    display: flex;
    align-items: center;
    gap: 6px;
}
.paste { width: 78px; padding-left: 8px; }
.paste svg { margin-left: 7px; }
.small-list {
    padding-top: 3px;
    display: flex;
    flex-direction: column;
}
.small-btn {
    height: 35px;
    display: flex;
    align-items: center;
    gap: 6px;
}
.small-btn.copy .caret { margin-left: 9px; }
.row-top {
    height: 35px;
    margin-top: 16px;
    display: flex;
}
.row-bottom {
    height: 32px;
    margin-top: 11px;
}
.select {
    border: 1px solid #b9b9b9;
    background: #fff;
    display: flex;
    align-items: center;
    justify-content: space-between;
    padding: 0 4px 1px 3px;
}
.select.name { width: 213px; letter-spacing: 0.1px; }
.select.size { width: 70px; margin-left: -1px; }
.select.format { width: 188px; }
.grow-a {
    display: flex;
    font-size: 24px;
    line-height: 36px;
    color: #555;
    margin-left: 7px;
    font-weight: 500;
}
.grow-a svg { margin-top: 5px; }
.grow-a.shrink {
    font-size: 20px;
    line-height: 40px;
    margin-left: 10px;
}
.font-tools {
    display: grid;
    grid-template-columns: 31px 32px 33px 18px 11px 29px 22px 7px 34px 16px 36px 14px 14px 28px 22px;
    place-items: center;
    color: #555;
}
.font-tools b, .under-u { font-size: 21px; }
.under-u { text-decoration: underline; font-weight: 600; text-decoration-thickness: 1.500px; text-underline-offset: 3px; }
.serif-i {
    font-family: "Liberation Serif", serif;
    font-size: 25px;
    font-weight: bold;
}
.font-color {
    width: 24px;
    height: 26px;
    border-bottom: 6px solid #f00;
    text-align: center;
    font-size: 23px;
    line-height: 20px;
    font-weight: 600;
}
.phonetic {
    display: flex;
    flex-direction: column;
    align-items: center;
    color: #3f7ab3;
    font-size: 15px;
    line-height: 17px;
}
.phonetic small {
    color: #444;
    font-size: 12px;
    line-height: 15px;
}
.align-left {
    width: 188px;
    padding-left: 12px;
    position: relative;
}
.align-left::after {
    content: "";
    position: absolute;
    right: 0;
    top: 14px;
    width: 1px;
    height: 85px;
    background: #d0d0d0;
}
.align-tools {
    display: grid;
    grid-template-columns: 32px 32px 32px 8px 35px 8px;
    place-items: center;
}
.align-tools.second { grid-template-columns: 32px 32px 32px 8px 34px 30px; }
.align-tools .up { margin-bottom: 12px; }
.pressed {
    width: 32px;
    height: 34px;
    background: #c6c6c6;
    display: flex;
    justify-content: center;
    align-items: flex-end;
    padding-bottom: 6px;
}
.wrap-btn {
    margin-left: 10px;
    display: grid;
    grid-template-columns: 24px auto auto;
    justify-content: start;
    align-items: center;
    justify-items: center;
    column-gap: 4px;
}
.wrap-btn .caret { margin-left: 10px; }
.number-tools {
    display: grid;
    grid-template-columns: 32px 18px 34px 30px 10px 32px 32px;
    place-items: center;
    color: #555;
}
.percent { font-size: 24px; }
.styles .group-body { padding-left: 7px; }
.styles .big-btn:nth-child(1) { width: 88px; }
.styles .big-btn:nth-child(2) { width: 86px; }
.styles .big-btn:nth-child(3) { width: 100px; }
.cells .group-body { padding-left: 11px; }
.cells .big-btn { width: 62.500px; }
.editing .group-body { padding-left: 16px; }
.editing .small-list { width: 127px; }
.editing .small-btn { height: 34px; }
.editing .small-btn .caret { margin-left: 0; }
.editing .small-btn.sum .caret { margin-left: 8px; }
.editing .big-btn { width: 98px; }
.collapse {
    margin: 125px 11px 0 auto;
}

/* formula bar */
.formula-bar {
    height: 67px;
    flex: none;
    display: flex;
    align-items: center;
    padding: 0 7px 0 7px;
}
.box {
    height: 37px;
    background: #fdfdfd;
    border: 1px solid #c3c3c3;
    display: flex;
    align-items: center;
    justify-content: space-between;
    color: #444;
}
.name-box { width: 152px; padding: 0 10px 0 6px; }
.dots {
    width: 3px;
    height: 17px;
    margin: 0 22px 0 20px;
    background: repeating-linear-gradient(#b0b0b0 0 3px, transparent 3px 7px);
}
.fx-box { width: 164px; padding: 0 18px; }
.fx {
    font-family: "Liberation Serif", serif;
    font-style: italic;
    font-weight: bold;
    font-size: 25px;
    color: #666;
}
.formula {
    flex: 1;
    margin-left: 4px;
    padding: 0 7px 2px 16px;
    font-size: 22px;
}
.formula small {
    font-size: 18.500px;
    white-space: pre;
}

/* grid */
.workbook {
    height: 1011px;
    flex: none;
    display: flex;
}
.grid-area {
    width: 2130px;
    overflow: hidden;
    border-right: 1px solid #999;
}
.col-heads {
    height: 33px;
    display: flex;
    border-bottom: 1px solid #999;
    font-size: 22px;
    line-height: 30px;
    color: #000;
}
.corner {
    width: 48px;
    flex: none;
    padding: 4px 0 0 19px;
    border-right: 1px solid #b5b5b5;
}
.col {
    width: 88px;
    flex: none;
    text-align: center;
    border-right: 1px solid #b5b5b5;
}
.col.a {
    background: #d2d2d2;
    color: #217346;
}
.col.b { width: 62px; }
.col.c { width: 218px; }
.grid-body {
    display: flex;
    height: 978px;
}
.row-heads {
    width: 48px;
    flex: none;
    border-right: 1px solid #999;
    overflow: hidden;
    font-size: 22px;
    color: #000;
}
.row {
    height: 33px;
    line-height: 30px;
    text-align: center;
    border-bottom: 1px solid #b0b0b0;
}
.row.selected {
    background: #d2d2d2;
    color: #217346;
}
.sheet {
    flex: 1;
    position: relative;
    background: #fff;
    color: #000;
}
.banner {
    width: 1155px;
    height: 124px;
    padding: 12px 27px;
    background: #f1f1f1;
    font-size: 30px;
    line-height: 49.500px;
}
.lat {
    white-space: pre;
    letter-spacing: 0.6px;
}
.charts {
    display: flex;
    gap: 63px;
    margin: 59px 0 0 34px;
}
.chart-label {
    font-size: 19px;
    letter-spacing: -0.4px;
    text-anchor: middle;
    fill: #404040;
}
.callouts {
    display: flex;
    gap: 107px;
    margin: 19px 0 0 62px;
}
.callout {
    width: 465px;
    height: 92px;
    padding-top: 9px;
    background: #dae2f3;
    font-size: 22px;
    line-height: 39px;
    text-align: center;
}
.callout .second { padding-right: 18px; }
.nav-band {
    width: 1155px;
    height: 105px;
    margin-top: 69px;
    padding: 21px 44px;
    display: flex;
    justify-content: space-between;
    background: #f1f1f1;
}
.nav-text {
    font-size: 24px;
    text-anchor: middle;
    fill: #107854;
}
.arrow { position: absolute; }
.arrow.first { left: 287px; top: 515px; }
.arrow.last { left: 971px; top: 395px; }
.cell-cursor {
    position: absolute;
    left: -2px;
    top: -2px;
    width: 90px;
    height: 35px;
    border-left: 2px solid #217346;
    border-top: 2px solid #217346;
}
.v-scroll {
    width: 25px;
    height: 1013px;
    margin: 1px 0 0 2px;
    background: #dadada;
    display: flex;
    flex-direction: column;
    z-index: 1;
}
.scroll-btn {
    width: 25px;
    height: 25px;
    flex: none;
    display: flex;
    align-items: center;
    justify-content: center;
    background: #fff;
    border: 1px solid #ababab;
}
.v-thumb {
    height: 268px;
    background: #fff;
    border: 1px solid #ababab;
}
.v-scroll .end { margin-top: auto; }

/* sheet tabs */
.sheet-tabs {
    height: 34px;
    flex: none;
    display: flex;
    border-top: 1px solid #999;
    border-bottom: 1px solid #c6c6c6;
    font-size: 20px;
    color: #000;
}
.tab-nav {
    width: 115px;
    display: flex;
    align-items: center;
    gap: 28px;
    padding-left: 29px;
}
.tab {
    width: 36px;
    flex: none;
    height: 28px;
    padding: 2px 4px 0 2px;
    border-left: 1px solid #999;
}
.tab span {
    display: block;
    height: 27px;
    line-height: 18px;
    text-align: center;
    background: #d9d9d9;
}
.tab.two { width: 48px; }
.tab.start { width: 64px; }
.tab.more { width: 144px; border-right: 1px solid #999; }
.tab.start span, .tab.more span {
    background: #217346;
    color: #fff;
}
.tab.current {
    height: 30px;
    margin-top: -1px;
    padding: 0;
    background: #fff;
    border-right: 1px solid #999;
    border-bottom: 3px solid #217346;
}
.tab.current span {
    background: linear-gradient(#fff 60%, #eee);
    color: #217346;
    line-height: 24px;
}
.tab.after { border-left: 0; padding-left: 3px; }
.add-sheet { margin: 4px 0 0 37px; }
.h-scroll-wrap {
    margin: 3px 29px 0 auto;
    display: flex;
}
.dots.small { margin: 5px 18px 0 0; }
.h-scroll {
    width: 292px;
    height: 25px;
    background: #dadada;
    display: flex;
}
.h-thumb {
    width: 230px;
    background: #fff;
    border: 1px solid #ababab;
}
.h-scroll .end { margin-left: auto; }

/* status bar */
.status-bar {
    height: 32px;
    flex: none;
    display: flex;
    align-items: center;
    justify-content: flex-end;
    background: #f3f3f3;
    padding: 0 10px 2px 0;
}
.view-btn {
    width: 60px;
    height: 32px;
    display: flex;
    align-items: center;
    justify-content: center;
}
.view-btn.on { background: #c6c6c6; }
.zoom-slider { margin: 0 17px 0 8px; }
.zoom-text { width: 49px; }

/* taskbar */
.taskbar {
    height: 60px;
    flex: none;
    display: flex;
    background: #060b13;
    color: #fff;
}
.start-btn {
    width: 72px;
    display: flex;
    align-items: center;
    justify-content: center;
}
.search {
    width: 516px;
    display: flex;
    align-items: center;
    gap: 13px;
    padding: 0 22px 1px 13px;
    background: #f2f2f2;
    border-top: 1px solid #bbb;
    color: #333;
    font-size: 22px;
}
.mic { margin-left: auto; }
.task-view {
    width: 83px;
    display: flex;
    align-items: center;
    padding-left: 24px;
}
.task {
    display: flex;
    align-items: center;
    height: 60px;
    border-bottom: 3px solid transparent;
}
.task.open { border-bottom-color: #74b4ea; }
.folder { width: 228px; padding-left: 14px; gap: 12px; }
.mail { width: 89px; padding-left: 26px; }
.edge { width: 228px; padding-left: 9px; gap: 3px; }
.excel { width: 240px; margin-left: 8px; padding-left: 15px; gap: 4px; background: #3b3f46; }
.tray {
    flex: 1;
    display: flex;
    align-items: center;
    padding-left: 171px;
}
.t-cloud { margin-left: 15px; }
.t-bat { margin-left: 13px; }
.t-wifi { margin-left: 16px; }
.t-vol { margin-left: 15px; }
.t-lang {
    margin-left: 11px;
    font-size: 23px;
    font-weight: 500;
}
.t-ime {
    margin-left: 21px;
    width: 22px;
    height: 22px;
    line-height: 21px;
    font-size: 20px;
    text-align: center;
    background: #fff;
    color: #000;
}
.clock {
    width: 100px;
    margin-left: 23px;
    display: flex;
    flex-direction: column;
    align-items: center;
    line-height: 28px;
    letter-spacing: 0.4px;
}
.t-m { margin-left: 28px; }
.notice {
    position: relative;
    margin-left: 37px;
}
.badge {
    position: absolute;
    left: 11px;
    top: 14px;
    width: 25px;
    height: 25px;
    border-radius: 50%;
    border: 1px solid #999;
    background: #222;
    text-align: center;
    font-weight: 600;
    line-height: 22px;
}

/* watermark */
.watermark {
    position: absolute;
    left: 1650px;
    top: 1200px;
    z-index: 2;
    fill: #fff;
    opacity: 0.82;
    filter: drop-shadow(0 0 1.500px rgba(0, 0, 0, 0.55));
}
.wm-du {
    stroke: #c0c0c0;
    stroke-width: 2.500;
}
```
